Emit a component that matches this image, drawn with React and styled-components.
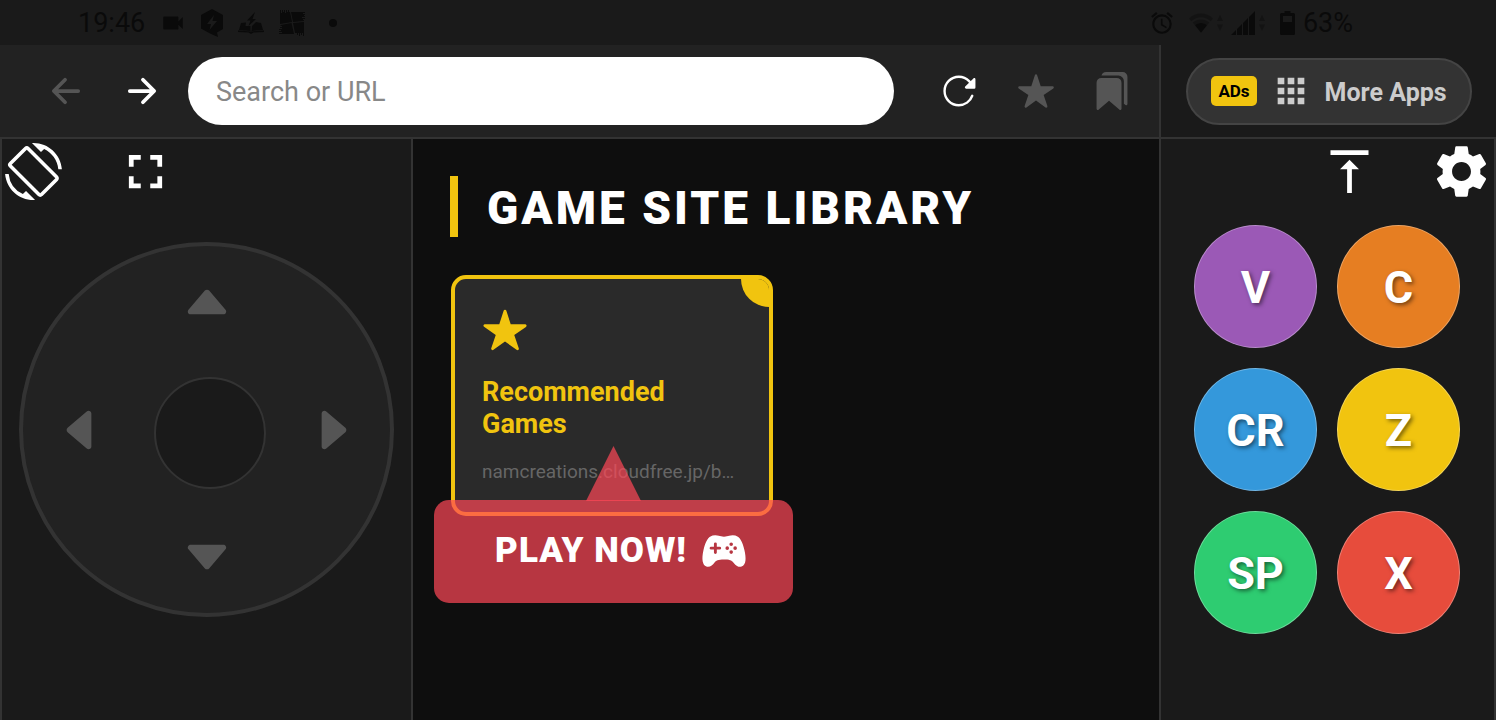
import styled, { createGlobalStyle } from "styled-components";
import {
    IoArrowBack,
    IoArrowForward,
    IoBookmarks,
    IoCaretBack,
    IoCaretDown,
    IoCaretForward,
    IoCaretUp,
    IoGameController,
    IoReload,
    IoStar,
} from "react-icons/io5";
import {
    MdAlarm,
    MdApps,
    MdFullscreen,
    MdScreenRotation,
    MdSettings,
    MdVerticalAlignTop,
    MdVideocam,
} from "react-icons/md";

const colors = {
    page: "#0e0e0e",
    panel: "#1a1a1a",
    bar: "#222",
    line: "#333",
    muted: "#555",
    status: "#0a0a0a",
    yellow: "#f1c40f",
}

const padKeys = [
    { label: "V", color: "#9b59b6" },
    { label: "C", color: "#e67e22" },
    { label: "CR", color: "#3498db" },
    { label: "Z", color: "#f1c40f" },
    { label: "SP", color: "#2ecc71" },
    { label: "X", color: "#e74c3c" },
]

const BoltBadgeIcon = () => (
    <svg width="22" height="28" viewBox="0 0 22 28" fill="currentColor">
        <path fillRule="evenodd" d="M11 0L22 6V20L16 23.500L17 28L9 24.500L0 19.500V6ZM13 6L6 15H10L8.500 21L16 12H11.500Z"/>
    </svg>
)

const BoltBookIcon = () => (
    <svg width="26" height="22" viewBox="0 0 26 22" fill="currentColor">
        <path d="M17 0L9 8.500H12.500L10.500 14L18 7H14.500Z"/>
        <path d="M3 11L8 10.500L7.500 14L12.500 14V19L1 18ZM23 11L18 10L14 14L13.500 19L25 18Z"/>
        <path d="M0 18.500V20L10.500 20.500L13 22L15.500 20.500L26 20V18.500L13 19.500Z"/>
    </svg>
)

const PatchIcon = () => (
    <svg width="26" height="26" viewBox="0 0 26 26" fill="currentColor">
        <path d="M1 0H2V3H3V0H4V2H5V0H6V3H7V0H8V2H9V0H10V2H11L13 12L1 14ZM12 2H26V3H24V4H26V5H25V6H26V7H23V8H26V9H24V10H25V11L14 12Z"/>
        <path d="M2 15L12.500 13L15 24H0V23H3V22H0V21H2V20H0V19H3V18H1V17H3V16H1ZM14 13L25 12V26H24V23H23V25H22V23H21V26H20V23H19V25H18V23H16Z"/>
    </svg>
)

const WifiIcon = () => (
    <svg width="24" height="22" viewBox="0 0 26 22" fill="currentColor">
        <path opacity=".35" d="M0 6C7-1 19-1 26 6L23.500 9C17 3.500 9 3.500 2.500 9ZM4 10.500C9 6 17 6 22 10.500L19.500 13.500C15.500 10 10.500 10 6.500 13.500Z"/>
        <path d="M6.500 13.500C10.500 10 15.500 10 19.500 13.500L13 21.500Z"/>
    </svg>
)

const TrafficIcon = () => (
    <svg width="6" height="16" viewBox="0 0 6 16" fill="currentColor" opacity=".4">
        <path d="M3 0L6 6H0ZM3 16L0 9.500H6Z"/>
    </svg>
)

const SignalIcon = () => (
    <svg width="24" height="24" viewBox="0 0 24 24" fill="currentColor">
        <path d="M0 24L5 19V24ZM6 18L11 13V24H6ZM12 12L17 7V24H12ZM18 6L24 0V24H18Z"/>
    </svg>
)

const BatteryIcon = () => (
    <svg width="15" height="24" viewBox="0 0 15 24" fill="currentColor">
        <path fillRule="evenodd" d="M4.500 0H10.500V2H13.500Q15 2 15 3.500V22.500Q15 24 13.500 24H1.500Q0 24 0 22.500V3.500Q0 2 1.500 2H4.500ZM3 5V11H12V5Z"/>
    </svg>
)

const StatusBar = () => (
    <Status>
        <StatusGroup $gap={15}>
            <StatusText>19:46</StatusText>
            <MdVideocam size={26}/>
            <BoltBadgeIcon/>
            <BoltBookIcon/>
            <PatchIcon/>
            <Dot/>
        </StatusGroup>
        <StatusGroup $gap={8}>
            <Alarm><MdAlarm size={26}/></Alarm>
            <Signal><WifiIcon/><TrafficIcon/></Signal>
            <Signal><SignalIcon/><TrafficIcon/></Signal>
            <Battery><BatteryIcon/><StatusText>63%</StatusText></Battery>
        </StatusGroup>
    </Status>
)

const BrowserBar = () => (
    <Toolbar>
        <NavButton aria-label="Back" $color={colors.muted}><IoArrowBack size={40}/></NavButton>
        <NavButton aria-label="Forward"><IoArrowForward size={40}/></NavButton>
        <SearchInput type="text" placeholder="Search or URL" aria-label="Search or URL"/>
        <NavButton aria-label="Reload"><IoReload size={38}/></NavButton>
        <NavButton aria-label="Favorite" $color={colors.muted}><IoStar size={38}/></NavButton>
        <NavButton aria-label="Bookmarks" $color={colors.muted}><IoBookmarks size={38}/></NavButton>
    </Toolbar>
)

const DirectionPad = () => (
    <Pad>
        <PadButton aria-label="Up" $area="up"><IoCaretUp size={60}/></PadButton>
        <PadButton aria-label="Left" $area="left"><IoCaretBack size={60}/></PadButton>
        <Nub/>
        <PadButton aria-label="Right" $area="right"><IoCaretForward size={60}/></PadButton>
        <PadButton aria-label="Down" $area="down"><IoCaretDown size={60}/></PadButton>
    </Pad>
)

const GameCard = () => (
    <CardWrap>
        <Card href="#games">
            <Corner/>
            <IoStar size={46}/>
            <CardTitle>Recommended Games</CardTitle>
            <CardUrl>namcreations.cloudfree.jp/b…</CardUrl>
        </Card>
        <PlayBubble>
            PLAY NOW!
            <IoGameController size={46}/>
        </PlayBubble>
    </CardWrap>
)

const App = () => {
    return (
        <Screen>
            <GlobalStyle/>
            <StatusBar/>
            <Header>
                <BrowserBar/>
                <AppsArea>
                    <AppsButton>
                        <AdsTag>ADs</AdsTag>
                        <MdApps size={40}/>
                        <AppsLabel>More Apps</AppsLabel>
                    </AppsButton>
                </AppsArea>
            </Header>
            <Body>
                <LeftPanel>
                    <Tools>
                        <ToolButton aria-label="Rotate screen"><MdScreenRotation size={57}/></ToolButton>
                        <ToolButton aria-label="Fullscreen"><MdFullscreen size={57}/></ToolButton>
                    </Tools>
                    <DirectionPad/>
                </LeftPanel>
                <Library>
                    <Title>GAME SITE LIBRARY</Title>
                    <GameCard/>
                </Library>
                <RightPanel>
                    <Tools $end>
                        <ToolButton aria-label="Scroll to top"><MdVerticalAlignTop size={57}/></ToolButton>
                        <ToolButton aria-label="Settings"><MdSettings size={63}/></ToolButton>
                    </Tools>
                    <Keys>
                        {padKeys.map((key) => (
                            <Key key={key.label} $color={key.color}>{key.label}</Key>
                        ))}
                    </Keys>
                </RightPanel>
            </Body>
        </Screen>
    )
}

export default App;

const GlobalStyle = createGlobalStyle`
    * {
        box-sizing: border-box;
    }
    body {
        margin: 0;
        background: ${colors.page};
        color: #fff;
        font-family: Roboto, "Liberation Sans", sans-serif;
    }
    button, input {
        font-family: inherit;
    }
    button {
        border: none;
        padding: 0;
        background: none;
        color: inherit;
        cursor: pointer;
    }
    svg {
        display: block;
        flex-shrink: 0;
    }
`

const Screen = styled.div`
    min-height: 100vh;
    display: flex;
    flex-direction: column;
`

const Status = styled.div`
    height: 45px;
    padding: 0 143px 0 78px;
    display: flex;
    align-items: center;
    justify-content: space-between;
    background: ${colors.panel};
    color: ${colors.status};
`

const StatusGroup = styled.div`
    display: flex;
    align-items: center;
    gap: ${(props) => props.$gap}px;
`

const StatusText = styled.span`
    padding-top: 2px;
    font-size: 27px;
    line-height: 43px;
`

const Dot = styled.span`
    width: 8px;
    height: 8px;
    margin-left: 9px;
    border-radius: 50%;
    background: currentColor;
`

const Alarm = styled.div`
    padding-right: 6px;
`

const Signal = styled.div`
    display: flex;
    align-items: center;
    gap: 4px;
`

const Battery = styled.div`
    display: flex;
    align-items: center;
    gap: 8px;
    padding-left: 7px;
`

const Header = styled.header`
    display: flex;
    background: ${colors.panel};
    border-bottom: 2px solid ${colors.line};
`

const Toolbar = styled.nav`
    flex: 1;
    display: flex;
    align-items: center;
    padding: 12px 9px 12px 28px;
    background: ${colors.bar};
`

const NavButton = styled.button`
    width: 76px;
    height: 68px;
    display: flex;
    align-items: center;
    justify-content: center;
    color: ${(props) => props.$color || "#fff"};
`

const SearchInput = styled.input`
    flex: 1;
    min-width: 0;
    height: 68px;
    margin: 0 28px 0 8px;
    padding: 2px 28px 0;
    border: none;
    border-radius: 34px;
    background: #fff;
    color: #222;
    font-size: 27px;
    &::placeholder {
        color: #888;
        opacity: 1;
    }
`

const AppsArea = styled.div`
    width: 337px;
    display: flex;
    align-items: center;
    padding: 0 24px 0 25px;
    border-left: 2px solid ${colors.line};
`

const AppsButton = styled.button`
    flex: 1;
    height: 67px;
    display: flex;
    align-items: center;
    justify-content: center;
    gap: 14px;
    border: 2px solid #444;
    border-radius: 34px;
    background: #333;
    color: #ccc;
    font-weight: bold;
`

const AppsLabel = styled.span`
    padding-top: 2px;
    font-size: 25px;
`

const AdsTag = styled.span`
    padding: 0 7px;
    border-radius: 5px;
    background: ${colors.yellow};
    color: #000;
    font-size: 17px;
    line-height: 30px;
`

const Body = styled.main`
    flex: 1;
    display: flex;
`

const LeftPanel = styled.section`
    width: 413px;
    border: solid ${colors.line};
    border-width: 0 2px;
    background: ${colors.panel};
`

const RightPanel = styled(LeftPanel)`
    width: 337px;
`

const Tools = styled.div`
    height: 65px;
    display: flex;
    align-items: center;
    justify-content: ${(props) => (props.$end ? "flex-end" : "flex-start")};
    gap: ${(props) => (props.$end ? 52 : 55)}px;
    padding: 0 ${(props) => (props.$end ? 1 : 3)}px;
`

const ToolButton = styled.button`
    display: flex;
`

const Pad = styled.div`
    width: 375px;
    height: 375px;
    margin: 38px auto 0;
    padding: 26px;
    display: grid;
    grid-template: "up up up" 60px "left nub right" 1fr "down down down" 60px / 60px 1fr 60px;
    place-items: center;
    border: 4px solid ${colors.line};
    border-radius: 50%;
    background: ${colors.bar};
`

const PadButton = styled.button`
    grid-area: ${(props) => props.$area};
    display: flex;
    color: ${colors.muted};
`

const Nub = styled.div`
    grid-area: nub;
    width: 112px;
    height: 112px;
    margin: 6px 0 0 6px;
    border: 2px solid ${colors.line};
    border-radius: 50%;
    background: ${colors.panel};
`

const Library = styled.section`
    flex: 1;
    padding: 37px;
`

const Title = styled.h1`
    margin: 0 0 38px;
    padding: 4px 0 0 29px;
    border-left: 8px solid ${colors.yellow};
    font-size: 46px;
    font-weight: 900;
    line-height: 57px;
    letter-spacing: 3px;
`

const CardWrap = styled.div`
    position: relative;
    width: 322px;
    margin-left: 1px;
`

const Card = styled.a`
    position: relative;
    display: block;
    overflow: hidden;
    padding: 28px 27px;
    border: 4px solid ${colors.yellow};
    border-radius: 15px;
    background: #2a2a2a;
    color: ${colors.yellow};
    text-decoration: none;
`

const Corner = styled.span`
    position: absolute;
    top: 0;
    right: 0;
    width: 28px;
    height: 28px;
    border-bottom-left-radius: 28px;
    background: ${colors.yellow};
`

const CardTitle = styled.h2`
    margin: 23px 0 19px;
    font-size: 27px;
    line-height: 32px;
`

const CardUrl = styled.p`
    margin: 0;
    overflow: hidden;
    color: #666;
    font-size: 19px;
    line-height: 25px;
    white-space: nowrap;
`

const PlayBubble = styled.div`
    position: absolute;
    top: 225px;
    left: -17px;
    width: 359px;
    height: 103px;
    display: flex;
    align-items: center;
    justify-content: flex-end;
    gap: 14px;
    padding: 0 46px 2px 0;
    border-radius: 15px;
    background: rgba(255, 71, 87, 0.7);
    font-size: 35px;
    font-weight: 900;
    line-height: 42px;
    letter-spacing: 1px;
    white-space: nowrap;
    &::before {
        content: "";
        position: absolute;
        bottom: 102px;
        left: 152px;
        width: 55px;
        height: 55px;
        background: rgba(255, 71, 87, 0.7);
        clip-path: polygon(50% 0, 100% 100%, 0 100%);
    }
`

const Keys = styled.div`
    display: grid;
    grid-template-columns: 123px 123px;
    gap: 20px;
    justify-content: center;
    padding: 21px 1px 0 0;
`

const Key = styled.button`
    height: 123px;
    padding-top: 2px;
    border: 1px solid rgba(255, 255, 255, 0.3);
    border-radius: 50%;
    background: ${(props) => props.$color};
    color: #fff;
    font-size: 45px;
    font-weight: bold;
    text-shadow: 2px 2px 4px rgba(0, 0, 0, 0.5);
`
